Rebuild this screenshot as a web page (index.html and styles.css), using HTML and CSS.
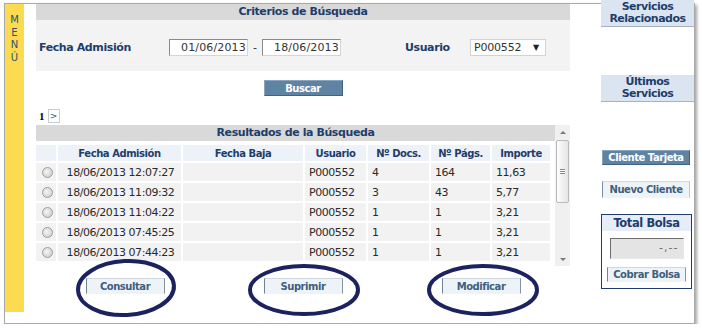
FILE: index.html
```html
<!DOCTYPE html>
<html lang="es">
<head>
    <meta charset="UTF-8">
    <meta name="viewport" content="width=device-width, initial-scale=1.0">
    <title>Consulta de Servicios</title>
    <link rel="stylesheet" href="styles.css">
</head>
<body>
    <div class="frame">
        <div class="menu"><span>M</span><span>E</span><span>N</span><span>Ú</span></div>

        <div class="main">
            <div class="criteria">
                <div class="panel-title">Criterios de Búsqueda</div>
                <div class="criteria-row">
                    <label class="lbl lbl-fecha" for="fechaDesde">Fecha Admisión</label>
                    <input class="date" type="text" id="fechaDesde" value="01/06/2013">
                    <span class="dash">-</span>
                    <input class="date" type="text" id="fechaHasta" value="18/06/2013">
                    <label class="lbl lbl-user">Usuario</label>
                    <div class="select">P000552 <span class="arrow">&#9660;</span></div>
                </div>
            </div>

            <div class="search-bar">
                <button class="btn-blue btn-buscar">Buscar</button>
            </div>

            <div class="pager"><b>1</b><a href="#">&gt;</a></div>

            <div class="results">
                <div class="results-body">
                    <div class="panel-title">Resultados de la Búsqueda</div>
                    <div class="grid-wrap">
                        <table class="grid">
                            <tr>
                                <th class="c-radio"></th>
                                <th class="c-fa">Fecha Admisión</th>
                                <th class="c-fb">Fecha Baja</th>
                                <th class="c-usu">Usuario</th>
                                <th class="c-docs">Nº Docs.</th>
                                <th class="c-pags">Nº Págs.</th>
                                <th class="c-imp">Importe</th>
                            </tr>
                            <tr>
                                <td><span class="radio"></span></td>
                                <td class="fa">18/06/2013 12:07:27</td>
                                <td></td>
                                <td>P000552</td>
                                <td>4</td>
                                <td>164</td>
                                <td>11,63</td>
                            </tr>
                            <tr>
                                <td><span class="radio"></span></td>
                                <td class="fa">18/06/2013 11:09:32</td>
                                <td></td>
                                <td>P000552</td>
                                <td>3</td>
                                <td>43</td>
                                <td>5,77</td>
                            </tr>
                            <tr>
                                <td><span class="radio"></span></td>
                                <td class="fa">18/06/2013 11:04:22</td>
                                <td></td>
                                <td>P000552</td>
                                <td>1</td>
                                <td>1</td>
                                <td>3,21</td>
                            </tr>
                            <tr>
                                <td><span class="radio"></span></td>
                                <td class="fa">18/06/2013 07:45:25</td>
                                <td></td>
                                <td>P000552</td>
                                <td>1</td>
                                <td>1</td>
                                <td>3,21</td>
                            </tr>
                            <tr>
                                <td><span class="radio"></span></td>
                                <td class="fa">18/06/2013 07:44:23</td>
                                <td></td>
                                <td>P000552</td>
                                <td>1</td>
                                <td>1</td>
                                <td>3,21</td>
                            </tr>
                        </table>
                    </div>
                </div>
                <div class="scrollbar">
                    <div class="sb-up"></div>
                    <div class="sb-thumb"><span></span></div>
                    <div class="sb-track"></div>
                    <div class="sb-down"></div>
                </div>
            </div>

            <div class="actions">
                <button class="btn-light">Consultar</button>
                <button class="btn-light">Suprimir</button>
                <button class="btn-light">Modificar</button>
            </div>
        </div>

        <div class="side">
            <div class="side-title">Servicios<br>Relacionados</div>
            <div class="side-title side-ultimos">Últimos<br>Servicios</div>
            <button class="btn-blue btn-side">Cliente Tarjeta</button>
            <button class="btn-light btn-side btn-nuevo">Nuevo Cliente</button>
            <div class="bolsa">
                <div class="bolsa-title">Total Bolsa</div>
                <div class="bolsa-total">-,--</div>
                <button class="btn-light btn-cobrar">Cobrar Bolsa</button>
            </div>
        </div>
    </div>

    <svg class="marks" width="702" height="333" viewBox="0 0 702 333">
        <ellipse cx="126" cy="288" rx="48" ry="27" transform="rotate(-3 126 288)"/>
        <ellipse cx="304" cy="290" rx="54" ry="24"/>
        <ellipse cx="483" cy="290" rx="54" ry="24"/>
    </svg>
</body>
</html>
```

FILE: styles.css
```css
body {
    margin: 0;
    padding: 0;
    background: #fff;
    font-family: "DejaVu Sans", Verdana, sans-serif;
    font-size: 11px;
    color: #2a2a2a;
}

.frame {
    display: flex;
    align-items: flex-start;
    width: 689px;
    height: 319px;
    margin: 3px 0 0 4px;
    border: 1px solid #a9a9a9;
    box-shadow: 2px 2px 3px rgba(0, 0, 0, 0.35);
    background: #fff;
}

/* yellow side menu */
.menu {
    width: 19px;
    height: 298px;
    padding-top: 10px;
    background: #fddb50;
    display: flex;
    flex-direction: column;
    align-items: center;
    font-size: 10px;
    line-height: 12.5px;
    color: #2b5170;
}

.main {
    width: 534px;
    margin-left: 12px;
}

.panel-title {
    height: 16px;
    line-height: 16px;
    background: #d9d9d9;
    text-align: center;
    font-weight: bold;
    letter-spacing: -0.4px;
    color: #1f3d6b;
}

.criteria {
    background: #f3f3f3;
}

.criteria-row {
    height: 47px;
    padding-top: 4px;
    display: flex;
    align-items: center;
}

.lbl {
    font-weight: bold;
    letter-spacing: -0.4px;
    color: #1f3d6b;
}

.lbl-fecha {
    width: 130px;
    padding-left: 3px;
}

.lbl-user {
    width: 65px;
    margin-left: 64px;
}

.date {
    width: 79px;
    height: 17px;
    box-sizing: border-box;
    padding: 0 0 0 11px;
    border: 1px solid;
    border-color: #8a8a8a #d5d5d5 #d5d5d5 #8a8a8a;
    background: #fff;
    font-family: "DejaVu Sans", Verdana, sans-serif;
    font-size: 11px;
    letter-spacing: 0.15px;
    color: #333;
}

.dash {
    width: 14px;
    text-align: center;
}

.select {
    width: 76px;
    height: 17px;
    box-sizing: border-box;
    border: 1px solid #d2d2d2;
    background: #fff;
    padding-left: 3px;
    line-height: 15px;
    letter-spacing: -0.2px;
    color: #333;
    display: flex;
    justify-content: space-between;
}

.select .arrow {
    font-size: 8px;
    padding-right: 6px;
    color: #222;
}

.search-bar {
    display: flex;
    justify-content: center;
    margin-top: 9px;
}

button {
    font-family: "DejaVu Sans", Verdana, sans-serif;
    font-size: 10px;
    font-weight: bold;
    letter-spacing: -0.45px;
    cursor: pointer;
    padding: 0;
}

.btn-blue {
    background: #5f83a2;
    color: #fff;
    border: 1px solid;
    border-color: #8aa6bf #3f6281 #3f6281 #8aa6bf;
}

.btn-buscar {
    width: 79px;
    height: 16px;
}

.btn-light {
    background: #eef3f8;
    color: #3e5f80;
    border: 1px solid;
    border-color: #cfd8e1 #8193a6 #eef3f8 #6f8398;
}

.pager {
    height: 13px;
    margin-top: 13px;
    display: flex;
    align-items: center;
    padding-left: 3px;
}

.pager b {
    font-family: "Liberation Serif", serif;
    font-size: 11px;
    color: #000;
    margin-right: 3px;
}

.pager a {
    width: 10px;
    height: 12px;
    border: 1px solid #c4ccd5;
    font-size: 9px;
    line-height: 12px;
    text-align: center;
    color: #2d5d8f;
    text-decoration: none;
}

.results {
    display: flex;
    margin-top: 3px;
}

.results-body {
    width: 519px;
}

.grid-wrap {
    height: 124px;
    overflow: hidden;
    padding-top: 4px;
    box-sizing: border-box;
}

.grid {
    border-collapse: separate;
    border-spacing: 0;
    table-layout: fixed;
    width: 516px;
}

.grid th,
.grid td {
    border-right: 2px solid #fff;
    border-bottom: 2px solid #fff;
    padding: 0 0 0 4px;
    white-space: nowrap;
}

.grid th {
    height: 16px;
    background: #edf2f8;
    font-size: 10px;
    letter-spacing: -0.45px;
    color: #1f3d6b;
    text-align: center;
    padding: 0;
}

.grid td {
    height: 18px;
    background: #f2f2f2;
    letter-spacing: -0.45px;
}

.grid td.fa {
    text-align: center;
    padding-left: 2px;
}

.c-radio { width: 20px; }
.c-fa { width: 123px; }
.c-fb { width: 120px; }
.c-usu { width: 61px; }
.c-docs { width: 61px; }
.c-pags { width: 59px; }
.c-imp { width: 58px; }

.radio {
    display: block;
    width: 9px;
    height: 9px;
    margin-left: 2px;
    border: 1px solid #9c9c9c;
    border-radius: 50%;
    background: radial-gradient(circle at 40% 40%, #f4f4f4, #c9c9c9);
}

.scrollbar {
    width: 15px;
    height: 141px;
    background: #f0f0f0;
    display: flex;
    flex-direction: column;
    align-items: center;
}

.sb-up,
.sb-down {
    width: 0;
    height: 0;
    border-left: 3px solid transparent;
    border-right: 3px solid transparent;
}

.sb-up {
    border-bottom: 3px solid #777;
    margin: 6px 0 6px;
}

.sb-down {
    border-top: 3px solid #777;
    margin: 0 0 5px;
}

.sb-thumb {
    width: 13px;
    height: 63px;
    box-sizing: border-box;
    border: 1px solid #b9b9b9;
    border-radius: 2px;
    background: linear-gradient(to right, #fdfdfd, #e4e4e4);
    display: flex;
    align-items: center;
    justify-content: center;
}

.sb-thumb span {
    width: 5px;
    height: 5px;
    border-top: 1px solid #888;
    border-bottom: 1px solid #888;
    box-sizing: border-box;
    background: linear-gradient(#fff 40%, #888 40%, #888 60%, #fff 60%);
}

.sb-track {
    flex: 1;
}

.actions {
    display: flex;
    justify-content: center;
    gap: 99px;
    margin-top: 12px;
}

.actions .btn-light {
    width: 79px;
    height: 16px;
}

/* right column */
.side {
    width: 93px;
    margin-left: 31px;
    margin-top: -4px;
    display: flex;
    flex-direction: column;
    align-items: flex-start;
}

.side-title {
    width: 100%;
    height: 25px;
    padding-top: 1px;
    background: #dbe5f1;
    border-bottom: 1px solid #a6b3c0;
    text-align: center;
    font-weight: bold;
    line-height: 11.5px;
    letter-spacing: -0.5px;
    color: #1f3d6b;
}

.side-ultimos {
    margin-top: 48px;
}

.btn-side {
    width: 88px;
    height: 15px;
    margin-left: 1px;
}

.btn-blue.btn-side {
    margin-top: 48px;
}

.btn-nuevo {
    margin-top: 16px;
    height: 17px;
    border-color: #d2dae2 #c0c9d2 #eef3f8 #7a8ea3;
}

.bolsa {
    width: 89px;
    height: 73px;
    margin-top: 16px;
    border: 1px solid #1f3d6b;
    display: flex;
    flex-direction: column;
    align-items: center;
}

.bolsa-title {
    width: 100%;
    height: 16px;
    line-height: 16px;
    background: #e6edf6;
    text-align: center;
    font-weight: bold;
    font-size: 11.5px;
    letter-spacing: -0.4px;
    color: #1f3d6b;
}

.bolsa-total {
    width: 74px;
    height: 21px;
    margin-top: 7px;
    box-sizing: border-box;
    border: 1px solid;
    border-color: #6e6e6e #e8e8e8 #e8e8e8 #6e6e6e;
    background: #e4e4e4;
    text-align: right;
    padding-right: 4px;
    line-height: 18px;
    font-size: 11px;
    letter-spacing: 1px;
    color: #666;
}

.btn-cobrar {
    width: 79px;
    height: 15px;
    margin-top: 8px;
}

/* hand drawn marks over the action buttons */
.marks {
    position: absolute;
    top: 0;
    left: 0;
    pointer-events: none;
}

.marks ellipse {
    fill: none;
    stroke: #1c2260;
    stroke-width: 4;
}
```
